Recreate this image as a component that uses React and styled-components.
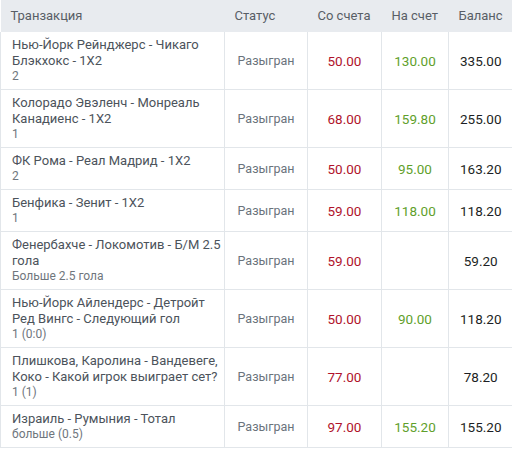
import styled, { createGlobalStyle } from "styled-components";

const GlobalStyle = createGlobalStyle`
  body {
    margin: 0;
    background: #fff;
    font-family: Roboto, "Liberation Sans", sans-serif;
  }
  *, *::before, *::after {
    box-sizing: border-box;
  }
`;

const Table = styled.table`
  width: 512px;
  border-collapse: collapse;
  table-layout: fixed;
`;

const HeadCell = styled.th`
  background: #e8ebef;
  color: #585e66;
  font-weight: 400;
  font-size: 13px;
  line-height: 16px;
  text-align: left;
  padding: 8px 10px;
  width: ${(p) => p.$w}px;
  white-space: nowrap;
`;

const Row = styled.tr`
  border-bottom: 1px solid #e2e6ea;
`;

const Cell = styled.td`
  border-left: 1px solid #e2e6ea;
  padding: 5px 2px;
  text-align: center;
  vertical-align: middle;
  font-size: 13.5px;
  line-height: 16px;
  color: ${(p) => p.$color || "#333"};
`;

const EventCell = styled(Cell)`
  text-align: left;
  font-size: 13px;
  padding: 5px 0 5px 11px;
`;

const Title = styled.div`
  color: #4c535b;
`;

const Sub = styled.div`
  color: #6f767d;
  font-size: 12px;
  line-height: 15px;
`;

const Status = styled(Cell)`
  color: #6a737c;
  font-size: 12.5px;
  padding: 5px 0;
`;

const rows = [
  ["Нью-Йорк Рейнджерс - Чикаго Блэкхокс - 1X2", "2", "50.00", "130.00", "335.00"],
  ["Колорадо Эвэленч - Монреаль Канадиенс - 1X2", "1", "68.00", "159.80", "255.00"],
  ["ФК Рома - Реал Мадрид - 1X2", "2", "50.00", "95.00", "163.20"],
  ["Бенфика - Зенит - 1X2", "1", "59.00", "118.00", "118.20"],
  ["Фенербахче - Локомотив - Б/М 2.5 гола", "Больше 2.5 гола", "59.00", "", "59.20"],
  ["Нью-Йорк Айлендерс - Детройт Ред Вингс - Следующий гол", "1 (0:0)", "50.00", "90.00", "118.20"],
  ["Плишкова, Каролина - Вандевеге, Коко - Какой игрок выиграет сет?", "1 (1)", "77.00", "", "78.20"],
  ["Израиль - Румыния - Тотал", "больше (0.5)", "97.00", "155.20", "155.20"],
];

export default function App() {
  return (
    <>
      <GlobalStyle />
      <Table>
        <thead>
          <tr>
            <HeadCell $w={224}>Транзакция</HeadCell>
            <HeadCell $w={83}>Статус</HeadCell>
            <HeadCell $w={74}>Со счета</HeadCell>
            <HeadCell $w={67}>На счет</HeadCell>
            <HeadCell $w={64}>Баланс</HeadCell>
          </tr>
        </thead>
        <tbody>
          {rows.map(([title, sub, out, inc, bal]) => (
            <Row key={title}>
              <EventCell>
                <Title>{title}</Title>
                <Sub>{sub}</Sub>
              </EventCell>
              <Status>Разыгран</Status>
              <Cell $color="#b0132b">{out}</Cell>
              <Cell $color="#5f9f2c">{inc}</Cell>
              <Cell $color="#1c1f24">{bal}</Cell>
            </Row>
          ))}
        </tbody>
      </Table>
    </>
  );
}
